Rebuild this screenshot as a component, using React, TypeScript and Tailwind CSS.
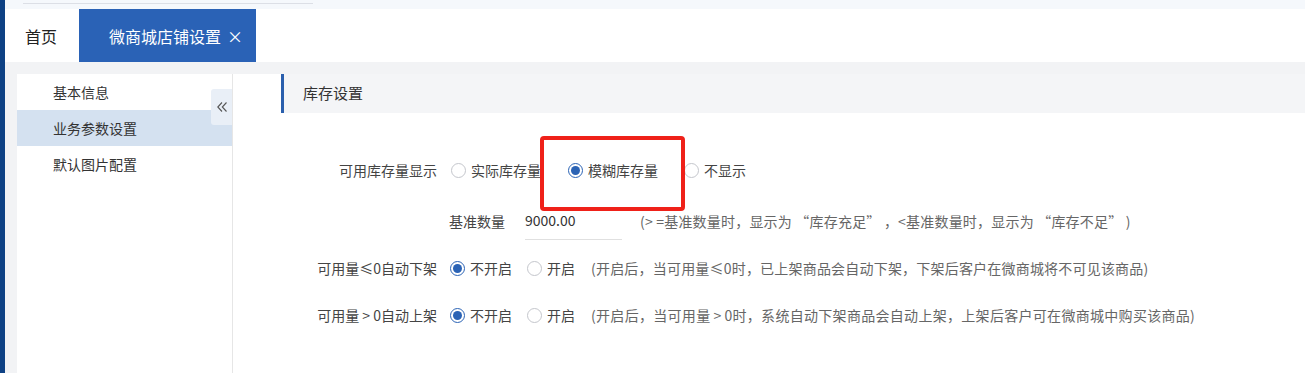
import React from 'react'

const font = { fontFamily: '"Noto Sans CJK SC", "Noto Sans", sans-serif' }

const Radio = ({ checked }: { checked?: boolean }) =>
  checked ? (
    <span className="w-[15px] h-[15px] rounded-full border border-[#2b63b5] bg-white flex items-center justify-center shrink-0">
      <span className="w-[9px] h-[9px] rounded-full bg-[#2b63b5]" />
    </span>
  ) : (
    <span className="w-[15px] h-[15px] rounded-full border border-[#c4c6cc] bg-white shrink-0" />
  )

const Option = ({ label, checked, className }: { label: string; checked?: boolean; className?: string }) => (
  <label className={`flex items-center ${className ?? ''}`}>
    <Radio checked={checked} />
    <span className="ml-[5px] text-[#444]">{label}</span>
  </label>
)

// comparison sign spaced out like the original font renders it
const Gt = () => <span className="inline-block w-[14px] text-center">&gt;</span>

const App: React.FC = () => {
  const menu = ['基本信息', '业务参数设置', '默认图片配置']

  return (
    <div className="flex h-[373px] w-full overflow-hidden text-[14px]" style={font}>
      <div className="w-[5px] bg-[#0e4184] shrink-0" />
      <div className="flex-1 flex flex-col">
        {/* top strip */}
        <div className="h-[9px] bg-[#f5f8fc] pl-[18px] pt-[3px]">
          <div className="w-[290px] h-px bg-[#dcdfe6]" />
        </div>

        {/* tabs */}
        <div className="h-[53px] bg-white flex items-stretch shrink-0">
          <div className="w-[74px] pl-[20px] flex items-center text-[16px] text-[#222]">首页</div>
          <div className="w-[177px] pl-[30px] bg-[#2a62b6] flex items-center text-[16px] text-white">
            微商城店铺设置
            <span className="ml-[6px] text-[16px] leading-none">×</span>
          </div>
        </div>

        {/* body */}
        <div className="flex-1 bg-[#f2f3f5] pt-[12px] pl-[12px] flex">
          <div className="w-[215px] bg-white relative shrink-0">
            {menu.map((m, i) => (
              <div
                key={m}
                className={`h-[36px] pl-[36px] flex items-center text-[#333] ${i === 1 ? 'bg-[#d4e1f0]' : ''}`}
              >
                {m}
              </div>
            ))}
            <div className="absolute right-0 top-[15px] w-[21px] h-[36px] bg-[#e9eff7] rounded-l-[3px] flex items-center justify-center">
              <svg width="12" height="12" viewBox="0 0 12 12" fill="none" stroke="#555" strokeWidth="1.1">
                <path d="M6 1.5 L1.8 6 L6 10.5" />
                <path d="M10.5 1.5 L6.3 6 L10.5 10.5" />
              </svg>
            </div>
          </div>

          <div className="flex-1 bg-white border-l border-[#e6e6e6] relative">
            <div className="ml-[48px] h-[39px] bg-[#f4f5f7] border-l-[3px] border-[#2a5fad] flex items-center pl-[19px] text-[15px] text-[#333]">
              库存设置
            </div>

            <div className="ml-[48px] mt-[34px]">
              {/* row 1 */}
              <div className="h-[47px] flex items-center">
                <div className="w-[156px] text-right text-[#444]">可用库存量显示</div>
                <Option className="ml-[14px]" label="实际库存量" />
                <Option className="ml-[27px]" label="模糊库存量" checked />
                <Option className="ml-[26px]" label="不显示" />
              </div>

              {/* row 2 */}
              <div className="h-[54px] flex items-center pl-[168px]">
                <span className="text-[#444]">基准数量</span>
                <div className="ml-[20px] w-[97px] h-[38px] border-b border-[#e0e0e0] flex items-center text-[#333]">
                  9000.00
                </div>
                <div className="ml-[18px] text-[#666] tracking-[0.2px]">
                  (&gt; =基准数量时，显示为 “库存充足” ，&lt;基准数量时，显示为 “库存不足” )
                </div>
              </div>

              {/* row 3 */}
              <div className="h-[40px] flex items-center">
                <div className="w-[156px] text-right text-[#444]">可用量≤0自动下架</div>
                <Option className="ml-[13px]" label="不开启" checked />
                <Option className="ml-[15px]" label="开启" />
                <div className="ml-[16px] text-[#666] tracking-[0.2px]">
                  (开启后，当可用量≤0时，已上架商品会自动下架，下架后客户在微商城将不可见该商品)
                </div>
              </div>

              {/* row 4 */}
              <div className="h-[54px] flex items-center">
                <div className="w-[156px] text-right text-[#444]">
                  可用量<Gt />0自动上架
                </div>
                <Option className="ml-[13px]" label="不开启" checked />
                <Option className="ml-[15px]" label="开启" />
                <div className="ml-[16px] text-[#666] tracking-[0.3px]">
                  (开启后，当可用量<Gt />0时，系统自动下架商品会自动上架，上架后客户可在微商城中购买该商品)
                </div>
              </div>
            </div>

            {/* annotation box */}
            <div className="absolute left-[307px] top-[62px] w-[145px] h-[75px] border-[4px] border-[#ef2119] rounded-[4px]" />
          </div>
        </div>
      </div>
    </div>
  )
}

export default App
